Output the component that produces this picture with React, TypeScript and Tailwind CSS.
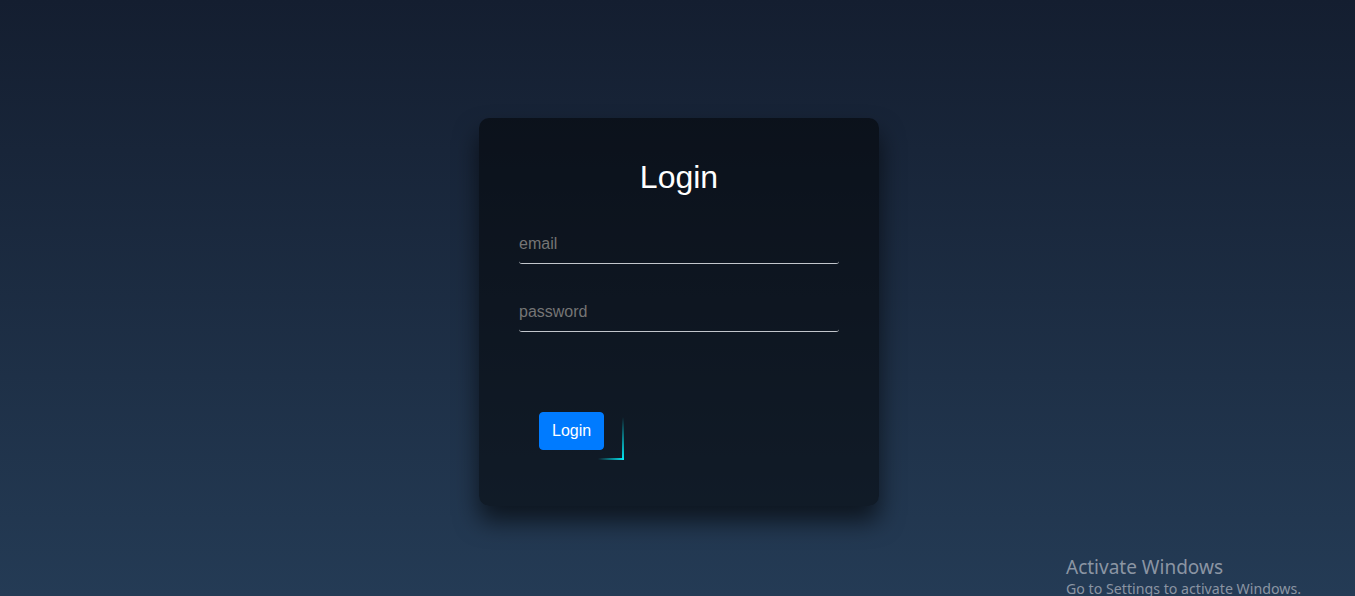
import React from 'react';

const App: React.FC = () => {
    return (
        <div className="relative min-h-screen w-full overflow-hidden bg-gradient-to-b from-[#141e30] to-[#243b55] font-['Liberation_Sans',Arial,sans-serif]">
            <div className="flex justify-center pl-[3px] pt-[118px]">
                <div className="w-[400px] h-[388px] rounded-[10px] bg-black/50 p-10 shadow-[0_15px_25px_rgba(0,0,0,0.6)]">
                    <h2 className="mb-[29px] text-center text-[32px] leading-[38px] text-white">Login</h2>
                    <form onSubmit={(e) => e.preventDefault()}>
                        <input
                            type="email"
                            placeholder="email"
                            className="mb-[29px] block w-full rounded-[3px] border-b border-[#c2c6cc] bg-transparent py-[10px] text-base leading-[18px] text-white outline-none placeholder:text-[#757575]"
                        />
                        <input
                            type="password"
                            placeholder="password"
                            className="mb-[30px] block w-full rounded-[3px] border-b border-[#c2c6cc] bg-transparent py-[10px] text-base leading-[18px] text-white outline-none placeholder:text-[#757575]"
                        />
                        <div className="relative mt-10 inline-block px-5 py-[10px]">
                            <button
                                type="submit"
                                className="rounded border border-[#007bff] bg-[#007bff] px-3 py-[6px] text-base leading-6 text-white"
                            >
                                Login
                            </button>
                            <span className="absolute bottom-0 right-0 h-[2px] w-[26px] bg-gradient-to-r from-transparent to-[#03e9f4]" />
                            <span className="absolute bottom-0 right-0 h-[43px] w-[2px] bg-gradient-to-b from-transparent to-[#03e9f4]" />
                        </div>
                    </form>
                </div>
            </div>
            <div className="absolute left-[1066px] top-[554px] font-['Noto_Sans',sans-serif] text-[#8b95a3]">
                <div className="text-[19px] leading-[26px]">Activate Windows</div>
                <div className="text-[14.2px] leading-[18px]">Go to Settings to activate Windows.</div>
            </div>
        </div>
    );
};

export default App;
